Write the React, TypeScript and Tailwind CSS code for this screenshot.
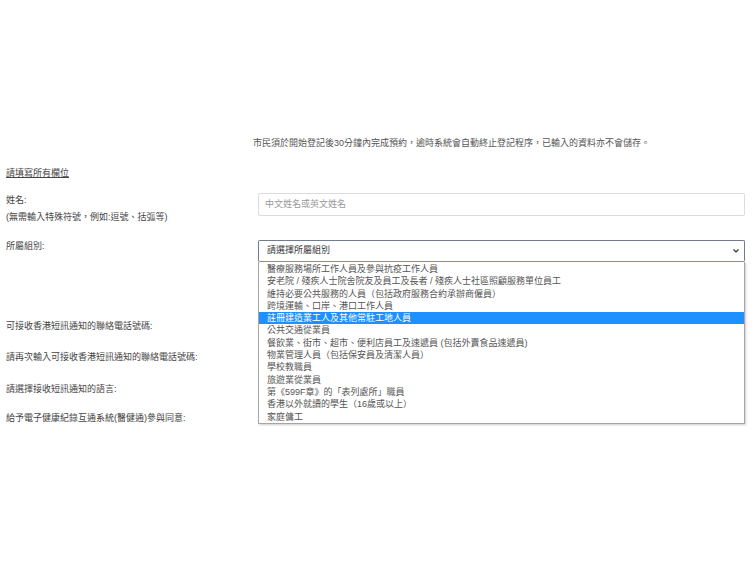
import React from "react";

const items = [
  "醫療服務場所工作人員及參與抗疫工作人員",
  "安老院 / 殘疾人士院舍院友及員工及長者 / 殘疾人士社區照顧服務單位員工",
  "維持必要公共服務的人員（包括政府服務合約承辦商僱員）",
  "跨境運輸、口岸、港口工作人員",
  "註冊建造業工人及其他常駐工地人員",
  "公共交通從業員",
  "餐飲業、街市、超市、便利店員工及速遞員 (包括外賣食品速遞員)",
  "物業管理人員（包括保安員及清潔人員）",
  "學校教職員",
  "旅遊業從業員",
  "第《599F章》的「表列處所」職員",
  "香港以外就讀的學生（16歲或以上）",
  "家庭傭工",
];

export default function App() {
  return (
    <div className="w-[753px] h-[565px] bg-white text-[9px] text-[#444] font-['Liberation_Sans','Noto_Sans_CJK_TC',sans-serif] overflow-hidden">
      <div className="pt-[137px]">
        <div className="pl-[253px] leading-[12px] h-[12px] text-[#555]">
          市民須於開始登記後30分鐘內完成預約，逾時系統會自動終止登記程序，已輸入的資料亦不會儲存。
        </div>
        <div className="mt-[18px] pl-[6px] leading-[12px] h-[12px]">
          <span className="underline">請填寫所有欄位</span>
        </div>

        {/* Name */}
        <div className="mt-[14px] flex items-start">
          <div className="w-[258px] shrink-0 pl-[6px] pt-[1px] leading-[12px]">
            <div>姓名:</div>
            <div className="mt-[5px]">(無需輸入特殊符號，例如:逗號、括弧等)</div>
          </div>
          <div className="flex-1 pr-[8px]">
            <div className="h-[23px] border border-[#dcdcdc] rounded-[2px] pl-[6px] flex items-center text-[#999]">
              中文姓名或英文姓名
            </div>
          </div>
        </div>

        {/* Group */}
        <div className="mt-[17px] flex items-start">
          <div className="w-[258px] shrink-0 pl-[6px] leading-[12px]">所屬組別:</div>
          <div className="flex-1 pr-[8px] relative">
            <div className="h-[22px] border border-[#6f7c8e] border-b-[#a6887c] rounded-[2px] pl-[8px] pr-[5px] flex items-center justify-between bg-white">
              <span className="text-[#333]">請選擇所屬組別</span>
              <svg width="6" height="4" viewBox="0 0 6 4">
                <path d="M0.5 0.5 L3 3 L5.5 0.5" fill="none" stroke="#333" strokeWidth="1.2" />
              </svg>
            </div>
            <div className="absolute left-0 right-[8px] top-[22px] z-10 bg-white border border-[#a5a5a5] border-t-0 shadow-[1px_1px_2px_rgba(0,0,0,0.2)] pt-[1px]">
              {items.map((t, i) => (
                <div
                  key={i}
                  className={
                    i === 4
                      ? "h-[12.3px] leading-[12.3px] pl-[8px] bg-[#1e90ff] text-white whitespace-nowrap"
                      : "h-[12.3px] leading-[12.3px] pl-[8px] text-[#555] whitespace-nowrap"
                  }
                >
                  {t}
                </div>
              ))}
            </div>
          </div>
        </div>

        {/* Phone */}
        <div className="mt-[57px] flex items-start">
          <div className="w-[258px] shrink-0 pl-[6px] pt-[1px] leading-[12px]">可接收香港短訊通知的聯絡電話號碼:</div>
          <div className="flex-1 pr-[8px]">
            <div className="h-[23px] border border-[#dcdcdc] rounded-[2px]" />
          </div>
        </div>

        {/* Phone again */}
        <div className="mt-[8px] flex items-start">
          <div className="w-[258px] shrink-0 pl-[6px] pt-[1px] leading-[12px]">請再次輸入可接收香港短訊通知的聯絡電話號碼:</div>
          <div className="flex-1 pr-[8px]">
            <div className="h-[23px] border border-[#dcdcdc] rounded-[2px]" />
          </div>
        </div>

        {/* Language */}
        <div className="mt-[9px] flex items-start">
          <div className="w-[258px] shrink-0 pl-[6px] pt-[1px] leading-[12px]">請選擇接收短訊通知的語言:</div>
          <div className="flex-1 pr-[8px]">
            <div className="h-[23px] border border-[#dcdcdc] rounded-[2px]" />
          </div>
        </div>

        {/* Consent */}
        <div className="mt-[6px] flex items-start">
          <div className="w-[258px] shrink-0 pl-[6px] pt-[1px] leading-[12px]">給予電子健康紀錄互通系統(醫健通)參與同意:</div>
          <div className="flex-1 pr-[8px] pt-[2px] flex gap-[40px]">
            <div className="w-[9px] h-[9px] rounded-full border border-[#888]" />
            <div className="w-[9px] h-[9px] rounded-full border border-[#888]" />
          </div>
        </div>
      </div>
    </div>
  );
}
